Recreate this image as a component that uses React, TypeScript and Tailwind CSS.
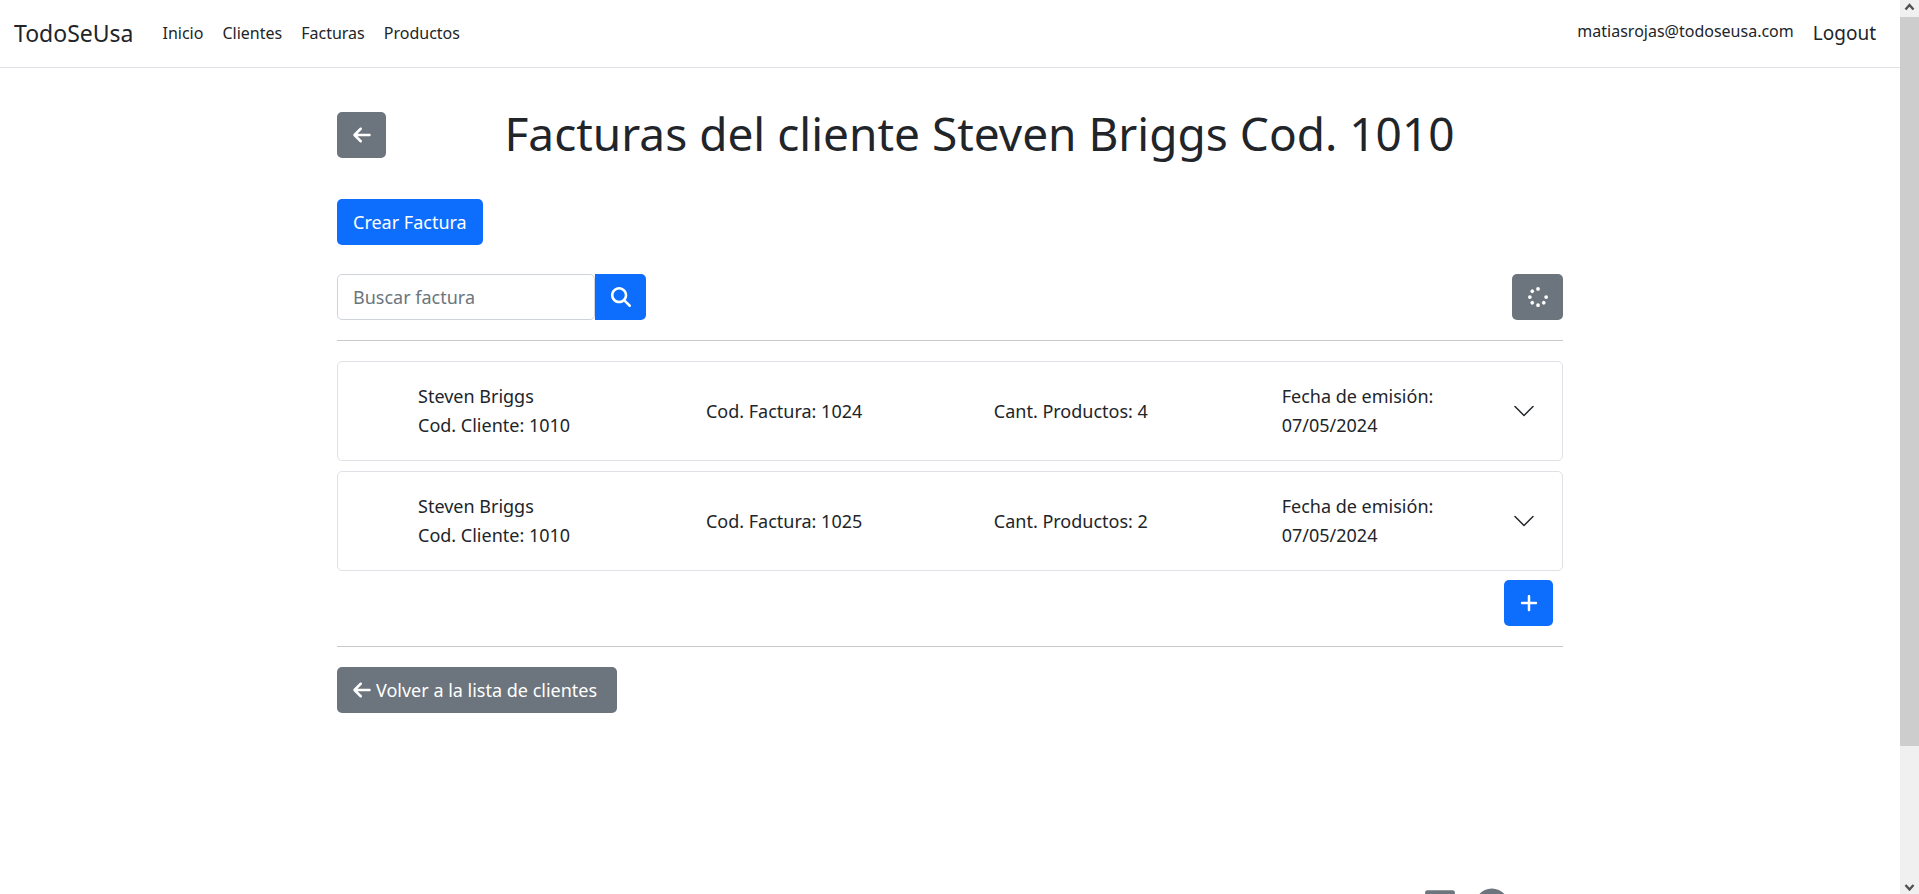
import { FaGithub, FaLinkedin } from "react-icons/fa";
import { FaArrowLeft, FaMagnifyingGlass, FaPlus, FaSpinner } from "react-icons/fa6";

const navLinks = ["Inicio", "Clientes", "Facturas", "Productos"];

const invoices = [
  { client: "Steven Briggs", clientCode: 1010, code: 1024, products: 4, date: "07/05/2024" },
  { client: "Steven Briggs", clientCode: 1010, code: 1025, products: 2, date: "07/05/2024" },
];

const button = "flex h-[46px] shrink-0 items-center justify-center rounded-[5px] text-white";

function ChevronDown() {
  return (
    <svg viewBox="0 0 16 16" className="size-6" fill="#212529" aria-hidden="true">
      <path
        fillRule="evenodd"
        d="M1.646 4.646a.5.5 0 0 1 .708 0L8 10.293l5.646-5.647a.5.5 0 0 1 .708.708l-6 6a.5.5 0 0 1-.708 0l-6-6a.5.5 0 0 1 0-.708z"
      />
    </svg>
  );
}

function Navbar() {
  return (
    <nav className="flex h-[68px] items-center border-b border-[#dee2e6] px-3.5">
      <a href="#" className="mr-[29px] text-[23px]">TodoSeUsa</a>
      <ul className="flex flex-1 gap-[19px] pb-0.5 text-base">
        {navLinks.map((link) => (
          <li key={link}>
            <a href="#">{link}</a>
          </li>
        ))}
      </ul>
      <span className="mr-[19px] pb-1.5 text-base">matiasrojas@todoseusa.com</span>
      <button type="button" className="mr-2.5 text-[19px]">Logout</button>
    </nav>
  );
}

function ScrollBar() {
  return (
    <div className="flex w-[19px] shrink-0 flex-col bg-[#f0f0f0]" aria-hidden="true">
      <svg viewBox="0 0 19 17" className="h-[17px] w-full" fill="none" stroke="#505050" strokeWidth="2.4">
        <path d="M5.5 9.500 9.500 5 13.500 9.500" />
      </svg>
      <div className="flex-[729] bg-[#cdcdcd]" />
      <div className="flex-[131]" />
      <svg viewBox="0 0 19 17" className="h-[17px] w-full" fill="none" stroke="#505050" strokeWidth="2.4">
        <path d="M5.500 8 9.500 12.500 13.500 8" />
      </svg>
    </div>
  );
}

export default function App() {
  return (
    <div className="flex h-screen overflow-hidden bg-white font-['Noto_Sans','Open_Sans',sans-serif] text-lg text-[#212529]">
      <div className="min-w-0 flex-1 overflow-hidden">
        <Navbar />
        <main className="mx-auto w-[1226px] max-w-full pt-[38px]">
          <div className="flex items-center">
            <button type="button" aria-label="Volver" className={`${button} w-[49px] bg-[#6c757d]`}>
              <FaArrowLeft className="size-5" />
            </button>
            <h1 className="flex-1 pb-1 pl-2.5 text-center text-[46px] leading-[54px]">
              Facturas del cliente Steven Briggs Cod. 1010
            </h1>
          </div>
          <button type="button" className={`${button} mt-[35px] bg-[#0d6efd] px-4`}>Crear Factura</button>
          <div className="mt-[29px] flex justify-between">
            <form className="flex" onSubmit={(event) => event.preventDefault()}>
              <input
                type="search"
                aria-label="Buscar factura"
                placeholder="Buscar factura"
                className="h-[46px] w-[258px] rounded-[5px] border border-[#ced4da] px-[15px] placeholder:text-[#6c757d]"
              />
              <button type="submit" aria-label="Buscar" className={`${button} w-[51px] rounded-l-none bg-[#0d6efd]`}>
                <FaMagnifyingGlass className="size-5" />
              </button>
            </form>
            <button type="button" aria-label="Recargar" className={`${button} w-[51px] bg-[#6c757d]`}>
              <FaSpinner className="size-5" />
            </button>
          </div>
          <hr className="my-5 border-[#c8c9ca]" />
          <ul className="flex flex-col gap-2.5">
            {invoices.map((invoice) => (
              <li key={invoice.code}>
                <button
                  type="button"
                  className="flex h-[100px] w-full items-center rounded-[5px] border border-[#dee2e6] pr-[26px] pl-20 text-left leading-[29px]"
                >
                  <span className="grid flex-1 grid-cols-[5fr_5fr_5fr_4fr] items-center">
                    <span>
                      {invoice.client}
                      <br />
                      Cod. Cliente: {invoice.clientCode}
                    </span>
                    <span>Cod. Factura: {invoice.code}</span>
                    <span>Cant. Productos: {invoice.products}</span>
                    <span>
                      Fecha de emisión:
                      <br />
                      {invoice.date}
                    </span>
                  </span>
                  <ChevronDown />
                </button>
              </li>
            ))}
          </ul>
          <div className="mt-[9px] flex justify-end pr-2.5">
            <button type="button" aria-label="Agregar" className={`${button} w-[49px] bg-[#0d6efd]`}>
              <FaPlus className="size-5" />
            </button>
          </div>
          <hr className="my-5 border-[#c8c9ca]" />
          <button type="button" className={`${button} gap-1 bg-[#6c757d] pr-5 pl-[15px]`}>
            <FaArrowLeft className="size-5" />
            Volver a la lista de clientes
          </button>
        </main>
        <footer className="mx-auto flex w-[1226px] max-w-full justify-end gap-[18px] pt-[175px] pr-[54px] text-[34px] text-[#6c757d]">
          <a href="#" aria-label="LinkedIn"><FaLinkedin /></a>
          <a href="#" aria-label="GitHub"><FaGithub /></a>
        </footer>
      </div>
      <ScrollBar />
    </div>
  );
}
